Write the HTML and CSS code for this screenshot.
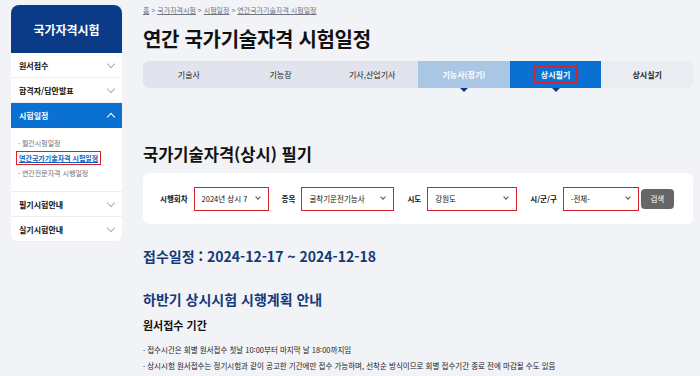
FILE: index.html
```html
<!DOCTYPE html>
<html lang="ko">
<head>
  <meta charset="UTF-8">
  <title>연간 국가기술자격 시험일정</title>
  <link rel="stylesheet" href="styles.css">
</head>
<body>
  <aside class="side">
    <div class="side-head">국가자격시험</div>
    <ul class="side-menu">
      <li class="side-item">원서접수<span class="chev"></span></li>
      <li class="side-item">합격자/답안발표<span class="chev"></span></li>
      <li class="side-item active">시험일정<span class="chev up"></span></li>
      <li class="side-sub">
        <a>· 월간시험일정</a>
        <a class="cur"><span class="mark">연간국가기술자격 시험일정</span></a>
        <a>· 연간전문자격 시행일정</a>
      </li>
      <li class="side-item">필기시험안내<span class="chev"></span></li>
      <li class="side-item">실기시험안내<span class="chev"></span></li>
    </ul>
  </aside>

  <main class="main">
    <div class="crumb"><u>홈</u> &gt; <u>국가자격시험</u> &gt; <u>시험일정</u> &gt; <u>연간국가기술자격 시험일정</u></div>
    <h1 class="title">연간 국가기술자격 시험일정</h1>

    <div class="tabs">
      <div class="tab">기술사</div>
      <div class="tab">기능장</div>
      <div class="tab">기사,산업기사</div>
      <div class="tab light">기능사(정기)</div>
      <div class="tab on"><span class="mark">상시필기</span></div>
      <div class="tab pale">상시실기</div>
    </div>

    <h2 class="sub-title">국가기술자격(상시) 필기</h2>

    <div class="filter">
      <label>시행회차</label>
      <div class="sel w1"><span class="val">2024년 상시 7</span><span class="chev"></span></div>
      <label>종목</label>
      <div class="sel w2"><span class="val">굴착기운전기능사</span><span class="chev"></span></div>
      <label>시도</label>
      <div class="sel w3"><span class="val">강원도</span><span class="chev"></span></div>
      <label>시/군/구</label>
      <div class="sel w4"><span class="val">-전체-</span><span class="chev"></span></div>
      <button class="btn">검색</button>
    </div>

    <p class="period">접수일정 : 2024-12-17 ~ 2024-12-18</p>

    <h3 class="plan">하반기 상시시험 시행계획 안내</h3>
    <h4 class="plan-sub">원서접수 기간</h4>
    <ul class="notes">
      <li>· 접수시간은 회별 원서접수 첫날 10:00부터 마지막 날 18:00까지임</li>
      <li>· 상시시험 원서접수는 정기시험과 같이 공고한 기간에만 접수 가능하며, 선착순 방식이므로 회별 접수기간 종료 전에 마감될 수도 있음</li>
    </ul>
  </main>
</body>
</html>
```

FILE: styles.css
```css
* {
  margin: 0;
  padding: 0;
  box-sizing: border-box;
}

body {
  font-family: "Noto Sans CJK KR", "Noto Sans", sans-serif;
  background: #f1f3f7;
  color: #111;
  display: flex;
  align-items: flex-start;
  gap: 21px;
  padding: 5px 7px 0 11px;
  width: 700px;
  height: 376px;
  overflow: hidden;
}

ul {
  list-style: none;
}

/* sidebar */
.side {
  width: 111px;
  flex-shrink: 0;
  background: #fff;
  border-radius: 8px;
  overflow: hidden;
}

.side-head {
  height: 48px;
  background: #0b3b87;
  color: #fff;
  font-size: 12px;
  font-weight: 700;
  display: flex;
  align-items: center;
  justify-content: center;
}

.side-item {
  height: 25px;
  padding: 0 6px 0 8px;
  display: flex;
  align-items: center;
  justify-content: space-between;
  font-size: 8px;
  font-weight: 700;
  border-bottom: 1px solid #eceef2;
}

.side-item.active {
  background: #0a70d2;
  color: #fff;
  border-bottom: none;
}

.chev {
  width: 6px;
  height: 6px;
  border-right: 1px solid #a7adb8;
  border-bottom: 1px solid #a7adb8;
  transform: rotate(45deg);
  margin: -3px 2px 0 0;
}

.chev.up {
  border-color: #fff;
  transform: rotate(-135deg);
  margin-top: 3px;
}

.side-sub {
  padding: 10px 7px 12px;
  display: flex;
  flex-direction: column;
  gap: 4px;
  border-bottom: 1px solid #eceef2;
}

.side-sub a {
  font-size: 7px;
  color: #6b7180;
  line-height: 11px;
}

.side-sub a.cur {
  color: #0a62c2;
  font-weight: 700;
  text-decoration: underline;
}

.mark {
  outline: 1.5px solid #d6202c;
  outline-offset: 1px;
}

.side-sub .mark {
  padding: 0 1px;
}

/* main */
.main {
  flex: 1;
  min-width: 0;
}

.crumb {
  font-size: 7px;
  color: #6f7480;
  line-height: 10px;
}

.title {
  font-size: 20px;
  font-weight: 700;
  line-height: 30px;
  margin-top: 9px;
  letter-spacing: -0.3px;
}

.tabs {
  display: flex;
  margin-top: 7px;
  height: 27px;
  background: #e1e4ec;
  border-radius: 6px;
}

.tab {
  flex: 1;
  display: flex;
  align-items: center;
  justify-content: center;
  font-size: 8px;
  color: #222;
  position: relative;
}

.tab.light {
  background: #a9c7e5;
  color: #fff;
  font-weight: 700;
}

.tab.on {
  background: #0a70d2;
  color: #fff;
  font-weight: 700;
}

.tab.on .mark {
  padding: 1px 5px;
}

.tab.pale {
  background: #eaecf1;
  font-weight: 700;
  border-radius: 0 6px 6px 0;
}

.tab.light::after,
.tab.on::after {
  content: "";
  position: absolute;
  left: 50%;
  top: 100%;
  margin-left: -4px;
  border-left: 4px solid transparent;
  border-right: 4px solid transparent;
  border-top: 4px solid #0b3b87;
}

.sub-title {
  font-size: 16.5px;
  font-weight: 700;
  margin-top: 54px;
  line-height: 24px;
}

.filter {
  margin-top: 7px;
  background: #fff;
  border-radius: 6px;
  height: 51px;
  display: flex;
  align-items: center;
  padding-left: 17px;
  font-size: 7.5px;
}

.filter label {
  font-weight: 700;
  margin-right: 6px;
  white-space: nowrap;
  flex-shrink: 0;
}

.sel {
  flex-shrink: 0;
  height: 24px;
  border: 1.5px solid #d6202c;
  display: flex;
  align-items: center;
  justify-content: space-between;
  gap: 3px;
  padding: 0 6px 0 7px;
  margin-right: 13px;
  white-space: nowrap;
}

.sel .val {
  overflow: hidden;
}

.sel .chev {
  flex-shrink: 0;
  border-color: #555;
  width: 4px;
  height: 4px;
}

.w1 { width: 75px; }
.w2 { width: 93px; }
.w3 { width: 90px; }
.w4 { width: 76px; margin-right: 2px; }

.btn {
  flex-shrink: 0;
  width: 33px;
  height: 20px;
  border: none;
  border-radius: 4px;
  background: #666;
  color: #fff;
  font-family: inherit;
  font-size: 7.5px;
}

.period {
  margin-top: 21px;
  font-size: 14px;
  font-weight: 700;
  color: #163a78;
  line-height: 22px;
}

.plan {
  margin-top: 21px;
  font-size: 14px;
  font-weight: 700;
  color: #163a78;
  line-height: 22px;
}

.plan-sub {
  margin-top: 7px;
  font-size: 11px;
  font-weight: 700;
  line-height: 16px;
}

.notes {
  margin-top: 9px;
  font-size: 7.5px;
  line-height: 16px;
  color: #222;
}
```
